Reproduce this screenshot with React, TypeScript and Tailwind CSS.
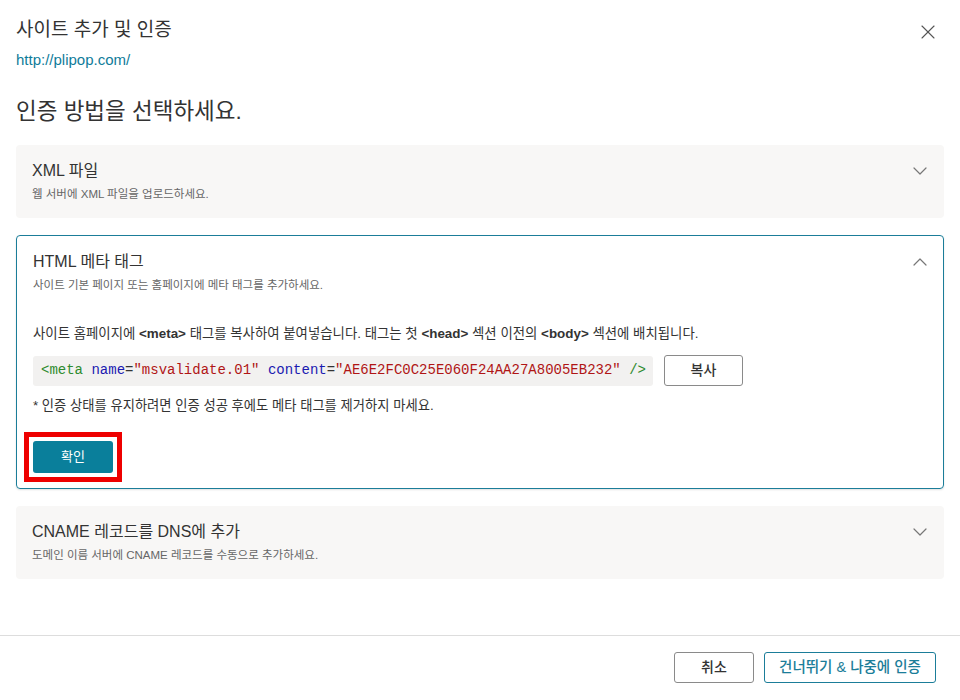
import { ChevronDown, ChevronUp, X } from 'lucide-react'

const sans = 'font-["Liberation_Sans","Noto_Sans_CJK_KR",sans-serif]'

function MethodCard({ title, desc, open }: { title: string; desc: string; open?: boolean }) {
  return (
    <div className="flex items-start justify-between">
      <div>
        <div className="text-[16px] leading-[24px] text-[#333]">{title}</div>
        <div className="mt-[2px] text-[11.5px] leading-[18px] text-[#666]">{desc}</div>
      </div>
      {open ? (
        <ChevronUp className="mr-[-2px] h-[24px] w-[24px] text-[#777]" strokeWidth={1.2} />
      ) : (
        <ChevronDown className="mr-[-2px] h-[24px] w-[24px] text-[#777]" strokeWidth={1.2} />
      )}
    </div>
  )
}

export default function App() {
  return (
    <div className={`${sans} flex h-[700px] w-[960px] flex-col bg-white`}>
      {/* header */}
      <div className="flex items-start justify-between px-4 pt-4">
        <div>
          <h1 className="text-[19px] leading-[28px] text-[#333]">사이트 추가 및 인증</h1>
          <a className="mt-[6px] block text-[15px] leading-[20px] text-[#0f7c9a]">http://plipop.com/</a>
        </div>
        <X className="mt-[4px] mr-[4px] h-[24px] w-[24px] text-[#555]" strokeWidth={1.1} />
      </div>

      <h2 className="mt-[26px] px-4 text-[22.5px] leading-[32px] text-[#333]">인증 방법을 선택하세요.</h2>

      <div className="mt-[17px] flex flex-col gap-[17px] px-4">
        <div className="rounded-[4px] bg-[#f8f7f6] pt-[14px] pr-[14px] pb-[15px] pl-[16px]">
          <MethodCard title="XML 파일" desc="웹 서버에 XML 파일을 업로드하세요." />
        </div>

        <div className="rounded-[4px] border border-[#1b7d99] pt-[14px] pr-[13px] pb-[6px] pl-[16px] shadow-[0_1px_2px_rgba(0,0,0,0.12)]">
          <MethodCard open title="HTML 메타 태그" desc="사이트 기본 페이지 또는 홈페이지에 메타 태그를 추가하세요." />

          <p className="mt-[30px] text-[13.4px] leading-[20px] text-[#333]">
            사이트 홈페이지에 <b>&lt;meta&gt;</b> 태그를 복사하여 붙여넣습니다. 태그는 첫 <b>&lt;head&gt;</b> 섹션 이전의{' '}
            <b>&lt;body&gt;</b> 섹션에 배치됩니다.
          </p>

          <div className="mt-[11px] flex items-center gap-[11px]">
            <div className="flex h-[30px] w-[620px] items-center rounded-[3px] bg-[#f2f1f0] pl-[8px]">
              <code className='whitespace-pre font-["Liberation_Mono",monospace] text-[14px] text-[#333]'>
                <span className="text-[#2e8b2e]">&lt;meta</span>
                {' '}
                <span className="text-[#1a1ab0]">name</span>
                {'='}
                <span className="text-[#b01515]">"msvalidate.01"</span>
                {' '}
                <span className="text-[#1a1ab0]">content</span>
                {'='}
                <span className="text-[#b01515]">"AE6E2FC0C25E060F24AA27A8005EB232"</span>
                {' '}
                <span className="text-[#2e8b2e]">/&gt;</span>
              </code>
            </div>
            <button className="h-[31px] w-[79px] rounded-[3px] border border-[#8a8a8a] bg-white text-[14px] font-medium text-[#333]">
              복사
            </button>
          </div>

          <p className="mt-[10px] text-[13.3px] leading-[20px] text-[#333]">
            * 인증 상태를 유지하려면 인증 성공 후에도 메타 태그를 제거하지 마세요.
          </p>

          <div className="mt-[16px] ml-[-9px] inline-block border-[5px] border-[#ee0000] p-[4px]">
            <button className="block h-[32px] w-[80px] rounded-[3px] bg-[#0a7f9b] text-[13px] text-white">확인</button>
          </div>
        </div>

        <div className="rounded-[4px] bg-[#f8f7f6] pt-[14px] pr-[14px] pb-[15px] pl-[16px]">
          <MethodCard title="CNAME 레코드를 DNS에 추가" desc="도메인 이름 서버에 CNAME 레코드를 수동으로 추가하세요." />
        </div>
      </div>

      {/* footer */}
      <div className="mt-auto flex justify-end gap-[10px] border-t border-[#dddddd] pt-[16px] pr-[24px] pb-[17px]">
        <button className="h-[31px] w-[80px] rounded-[3px] border border-[#8a8a8a] bg-white text-[14px] font-medium text-[#333]">
          취소
        </button>
        <button className="h-[31px] w-[172px] rounded-[3px] border border-[#1b7d99] bg-white text-[14.5px] font-medium text-[#1b7d99]">
          건너뛰기 &amp; 나중에 인증
        </button>
      </div>
    </div>
  )
}
